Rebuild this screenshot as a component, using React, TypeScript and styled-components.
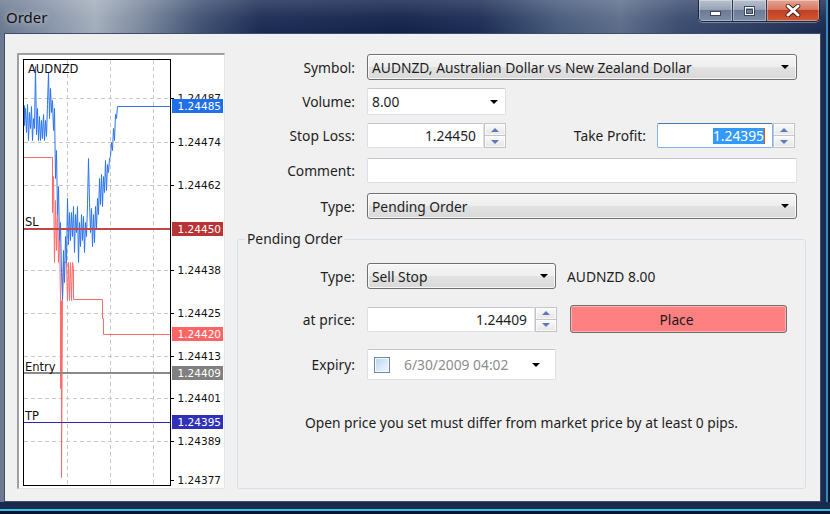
import React from "react";
import styled, { createGlobalStyle } from "styled-components";

const GlobalStyle = createGlobalStyle`
  html, body {
    margin: 0;
    padding: 0;
    background: #0b1530;
    overflow: hidden;
  }
  body {
    font-family: "Noto Sans", "Open Sans", sans-serif;
    font-size: 13.8px;
    color: #1e1e1e;
  }
`;

const Window = styled.div`
  width: 830px;
  height: 514px;
  box-sizing: border-box;
  display: flex;
  flex-direction: column;
  padding: 0 9px 12px 4px;
  background:
    linear-gradient(180deg, rgba(255,255,255,0.16) 0px, rgba(255,255,255,0.04) 18px, rgba(0,0,0,0) 33px),
    linear-gradient(90deg, #6a798f 0px, #8794a8 50px, #a3adbb 95px, #7c8a9e 140px, #3f5072 200px, #1b2b53 260px, #13224a 400px, #1c2c54 480px, #475a7b 560px, #5c6c89 620px, #3a4b6f 680px, #2a3b60 760px, #1a2a4e 830px);
  box-shadow:
    inset 0 -3px 0 #0a1430,
    inset 0 -5px 0 #36c0e2,
    inset 0 -12px 0 #1a2a4c,
    inset -2px 0 0 #0a1430,
    inset -4px 0 0 #2c8cbe;
`;

const TitleBar = styled.div`
  height: 33px;
  display: flex;
  align-items: flex-start;
  flex-shrink: 0;
`;

const Title = styled.div`
  margin: 8px 0 0 2px;
  font-size: 15px;
  line-height: 18px;
  color: #111;
  text-shadow: 0 0 6px rgba(255, 255, 255, 0.7);
`;

const Controls = styled.div`
  margin-left: auto;
  margin-right: 1px;
  display: flex;
  height: 21px;
  border: 1px solid #1a2540;
  border-top: none;
  border-radius: 0 0 5px 5px;
  overflow: hidden;
  box-shadow: 0 1px 0 rgba(255, 255, 255, 0.35);
`;

const CtlButton = styled.div<{ $close?: boolean; $w: number }>`
  width: ${(p) => p.$w}px;
  display: flex;
  align-items: center;
  justify-content: center;
  box-shadow: inset 0 0 0 1px rgba(255, 255, 255, 0.35);
  background: ${(p) =>
    p.$close
      ? "linear-gradient(180deg, #e6a494 0%, #d77a62 45%, #c13e22 50%, #cf5a36 100%)"
      : "linear-gradient(180deg, #b9c2cf 0%, #97a3b5 45%, #6d7c96 50%, #7d8ca4 100%)"};
  & + & {
    border-left: 1px solid #2c3856;
  }
`;

const Client = styled.div`
  flex: 1;
  display: flex;
  background: #f0f0f0;
  border: 1px solid #3d4d6b;
  padding: 19px 14px 12px 12px;
  min-height: 0;
`;

const ChartFrame = styled.div`
  width: 208px;
  height: 436px;
  box-sizing: border-box;
  flex-shrink: 0;
  background: #fff;
  border-style: solid;
  border-width: 2px 1px 1px 2px;
  border-color: #a0a0a0 #e4e4e4 #e4e4e4 #a0a0a0;
  svg {
    display: block;
  }
`;

const Form = styled.div`
  flex: 1;
  margin-left: 12px;
  display: flex;
  flex-direction: column;
  padding-top: 1px;
`;

const Row = styled.div<{ $h: number; $mt?: number }>`
  display: grid;
  grid-template-columns: 118px 1fr;
  column-gap: 12px;
  align-items: center;
  height: ${(p) => p.$h}px;
  margin-top: ${(p) => p.$mt ?? 0}px;
  padding-right: 9px;
`;

const Label = styled.div`
  text-align: right;
  white-space: nowrap;
`;

const Cell = styled.div`
  display: flex;
  align-items: center;
  height: 100%;
  min-width: 0;
`;

const SelectBox = styled.div<{ $w?: number }>`
  width: ${(p) => (p.$w ? `${p.$w}px` : "100%")};
  height: 26px;
  box-sizing: border-box;
  display: flex;
  align-items: center;
  padding: 0 7px 0 4px;
  border: 1px solid #707070;
  border-radius: 3px;
  background: linear-gradient(180deg, #f6f6f6 0%, #eeeeee 50%, #e2e2e2 52%, #d9d9d9 100%);
  box-shadow: inset 0 0 0 1px rgba(255, 255, 255, 0.75);
  white-space: nowrap;
`;

const SelectText = styled.span`
  flex: 1;
  overflow: hidden;
`;

const Arrow = styled.span`
  width: 0;
  height: 0;
  border-left: 4px solid transparent;
  border-right: 4px solid transparent;
  border-top: 4px solid #000;
  flex-shrink: 0;
`;

const TextBox = styled.div<{ $w?: number; $h?: number; $focus?: boolean; $right?: boolean }>`
  width: ${(p) => (p.$w ? `${p.$w}px` : "100%")};
  height: ${(p) => p.$h ?? 25}px;
  box-sizing: border-box;
  display: flex;
  align-items: center;
  justify-content: ${(p) => (p.$right ? "flex-end" : "flex-start")};
  padding: 0 7px 0 4px;
  background: #fff;
  border: 1px solid ${(p) => (p.$focus ? "#7eb4ea" : "#dce0e6")};
  border-top-color: ${(p) => (p.$focus ? "#3d7bad" : "#c2c6cd")};
  border-radius: 2px;
  white-space: nowrap;
  flex-shrink: 0;
`;

const Spinner = styled.div`
  width: 22px;
  height: 25px;
  box-sizing: border-box;
  display: flex;
  flex-direction: column;
  border: 1px solid #c4c4c4;
  flex-shrink: 0;
`;

const SpinHalf = styled.div`
  flex: 1;
  display: flex;
  align-items: center;
  justify-content: center;
  background: linear-gradient(180deg, #fafafa, #e6e6e6);
  box-shadow: inset 0 0 0 1px rgba(255, 255, 255, 0.7);
  & + & {
    border-top: 1px solid #c4c4c4;
  }
`;

const SpinArrow = styled.span<{ $up?: boolean }>`
  width: 0;
  height: 0;
  border-left: 4px solid transparent;
  border-right: 4px solid transparent;
  ${(p) => (p.$up ? "border-bottom: 4px solid #5b7ab8;" : "border-top: 4px solid #5b7ab8;")}
`;

const Selection = styled.span`
  background: #3399ff;
  color: #fff;
  line-height: 16px;
  border-right: 1px solid #c86400;
`;

const InlineLabel = styled.div`
  flex: 1;
  text-align: right;
  margin-right: 11px;
  white-space: nowrap;
`;

const Group = styled.fieldset`
  flex: 1;
  margin: 11px 0 0 0;
  padding: 15px 0 0 0;
  border: 1px solid #d5dfe5;
  border-radius: 3px;
  min-width: 0;
  display: flex;
  flex-direction: column;
`;

const Legend = styled.legend`
  margin-left: 7px;
  padding: 0 2px;
  line-height: 18px;
`;

const GroupRow = styled(Row)`
  grid-template-columns: 117px 1fr;
  padding-right: 0;
`;

const SideText = styled.span`
  margin-left: 11px;
  white-space: nowrap;
`;

const PlaceButton = styled.button`
  margin-left: 13px;
  width: 217px;
  height: 28px;
  border: 1px solid #707070;
  border-radius: 3px;
  background: #ff8080;
  box-shadow: inset 0 0 0 1px #ffb0b0;
  font-family: inherit;
  font-size: inherit;
  color: #1a1a1a;
  padding: 0 4px 0 0;
`;

const Check = styled.span`
  width: 16px;
  height: 16px;
  box-sizing: border-box;
  border: 1px solid #6f88a4;
  background: linear-gradient(135deg, #b8d4ee 0%, #dcebfa 60%, #eef5fd 100%);
  box-shadow: inset 0 0 0 1px #f4f8fc;
  margin: 0 14px 0 2px;
  flex-shrink: 0;
`;

const DateText = styled.span`
  color: #8c8c8c;
  width: 106px;
  overflow: hidden;
  white-space: nowrap;
  flex-shrink: 0;
`;

const Message = styled.div`
  margin-top: 34px;
  text-align: center;
  line-height: 18px;
`;

const gridLines = [
  { y: 98, label: "1.24487" },
  { y: 142, label: "1.24474" },
  { y: 185, label: "1.24462" },
  { y: 270, label: "1.24438" },
  { y: 313, label: "1.24425" },
  { y: 356, label: "1.24413" },
  { y: 398, label: "1.24401" },
  { y: 441, label: "1.24389" },
  { y: 480, label: "1.24377", noLine: true },
];

const markers = [
  { y: 106, label: "1.24485", color: "#1f6fe8" },
  { y: 229, label: "1.24450", color: "#b93434" },
  { y: 334, label: "1.24420", color: "#ff6464" },
  { y: 373, label: "1.24409", color: "#808080" },
  { y: 422, label: "1.24395", color: "#3030b8" },
];

const bid: [number, number][] = [
  [24,105],[24,125],[25,108],[26,132],[27,104],[28,140],[29,112],[30,128],[31,106],[32,140],[33,118],[34,128],[35,66],[36,134],[37,108],[38,140],[39,116],[40,140],[41,120],[42,138],[43,114],[44,140],[45,120],[46,136],[47,104],[48,72],[49,118],[50,88],[51,112],[52,100],[53,130],[54,108],[55,178],[56,150],[57,214],[58,186],[59,240],[60,222],[61,272],[62,299],[63,250],[64,282],[65,236],[66,262],[67,198],[68,244],[69,212],[70,240],[71,212],[72,236],[73,206],[74,252],[75,214],[76,232],[77,206],[78,262],[79,222],[80,246],[81,214],[82,240],[83,216],[84,252],[85,222],[86,236],[87,204],[88,158],[89,202],[90,232],[91,208],[92,246],[93,214],[94,242],[95,206],[96,228],[97,198],[98,214],[99,178],[100,204],[101,174],[102,206],[103,176],[104,192],[105,160],[106,190],[107,164],[108,172],[109,158],[110,156],[111,142],[112,150],[113,128],[114,140],[115,114],[116,118],[117,106],[170,106],
];

const ask: [number, number][] = [
  [23,157],[52,157],[52,212],[53,176],[54,262],[55,200],[56,250],[57,210],[58,262],[59,230],[60,300],[60,388],[61,300],[61,477],[62,300],[63,262],[66,262],[67,300],[68,262],[69,300],[70,262],[71,300],[72,262],[73,268],[73,299],[102,299],[102,318],[103,318],[103,334],[170,334],
];

const toPath = (pts: [number, number][]) =>
  pts.map(([x, y], i) => `${i ? "L" : "M"}${x + 0.5},${y + 0.5}`).join(" ");

function Chart() {
  return (
    <svg width={205} height={433} viewBox="19 55 205 433">
      {[67, 110, 153].map((x) => (
        <line key={x} x1={x + 0.5} y1={60} x2={x + 0.5} y2={485} stroke="#c8c8c8" strokeDasharray="4 3" />
      ))}
      {gridLines.filter((g) => !g.noLine).map((g) => (
        <line key={g.y} x1={24} y1={g.y + 0.5} x2={170} y2={g.y + 0.5} stroke="#c8c8c8" strokeDasharray="4 3" />
      ))}
      <path d={toPath(ask)} fill="none" stroke="#ff6a6a" strokeWidth={1} />
      <path d={toPath(bid)} fill="none" stroke="#2a74f0" strokeWidth={1} />
      <line x1={23} y1={229} x2={170} y2={229} stroke="#c04848" strokeWidth={2} />
      <line x1={23} y1={373} x2={170} y2={373} stroke="#8a8a8a" strokeWidth={2} />
      <line x1={23} y1={422.5} x2={170} y2={422.5} stroke="#2828b0" strokeWidth={1.2} />
      <rect x={23.5} y={59.5} width={147} height={426} fill="none" stroke="#000" />
      <g fontFamily="'DejaVu Sans', sans-serif" fontSize={10.5} fill="#111">
        {gridLines.map((g) => (
          <g key={g.label}>
            <line x1={171} y1={g.y + 0.5} x2={174} y2={g.y + 0.5} stroke="#000" />
            <text x={221} y={g.y + 4} textAnchor="end">{g.label}</text>
          </g>
        ))}
        {markers.map((m) => (
          <g key={m.label}>
            <rect x={172} y={m.y - 7} width={51} height={14} fill={m.color} />
            <text x={221} y={m.y + 4} textAnchor="end" fill="#fff">{m.label}</text>
          </g>
        ))}
      </g>
      <g fontFamily="'DejaVu Sans', sans-serif" fontSize={11.5} fill="#111">
        <text x={28} y={73}>AUDNZD</text>
        <text x={25} y={226}>SL</text>
        <text x={25} y={371}>Entry</text>
        <text x={25} y={420}>TP</text>
      </g>
    </svg>
  );
}

function SpinBox({ w, value, focus }: { w: number; value: React.ReactNode; focus?: boolean }) {
  return (
    <>
      <TextBox $w={w} $right $focus={focus}>{value}</TextBox>
      <Spinner>
        <SpinHalf><SpinArrow $up /></SpinHalf>
        <SpinHalf><SpinArrow /></SpinHalf>
      </Spinner>
    </>
  );
}

export default function App() {
  return (
    <>
      <GlobalStyle />
      <Window>
        <TitleBar>
          <Title>Order</Title>
          <Controls>
            <CtlButton $w={33}>
              <svg width="13" height="12" viewBox="0 0 13 12">
                <rect x="1.5" y="6.5" width="10" height="4" fill="#fff" stroke="#3a4560" />
              </svg>
            </CtlButton>
            <CtlButton $w={33}>
              <svg width="13" height="12" viewBox="0 0 13 12">
                <rect x="1.5" y="1.5" width="10" height="9" fill="none" stroke="#3a4560" />
                <rect x="2.5" y="2.5" width="8" height="7" fill="none" stroke="#fff" />
                <rect x="3.5" y="4.5" width="6" height="4" fill="none" stroke="#3a4560" />
              </svg>
            </CtlButton>
            <CtlButton $w={52} $close>
              <svg width="16" height="13" viewBox="0 0 16 13">
                <path d="M3 2 L13 11 M13 2 L3 11" stroke="#4a1a12" strokeWidth="4.6" strokeLinecap="round" />
                <path d="M3 2 L13 11 M13 2 L3 11" stroke="#fff" strokeWidth="3" strokeLinecap="round" />
              </svg>
            </CtlButton>
          </Controls>
        </TitleBar>
        <Client>
          <ChartFrame>
            <Chart />
          </ChartFrame>
          <Form>
            <Row $h={26}>
              <Label>Symbol:</Label>
              <SelectBox>
                <SelectText>AUDNZD, Australian Dollar vs New Zealand Dollar</SelectText>
                <Arrow />
              </SelectBox>
            </Row>
            <Row $h={27} $mt={8}>
              <Label>Volume:</Label>
              <Cell>
                <TextBox $w={139} $h={27}>
                  <SelectText>8.00</SelectText>
                  <Arrow />
                </TextBox>
              </Cell>
            </Row>
            <Row $h={25} $mt={8}>
              <Label>Stop Loss:</Label>
              <Cell>
                <SpinBox w={117} value="1.24450" />
                <InlineLabel>Take Profit:</InlineLabel>
                <SpinBox w={116} value={<Selection>1.24395</Selection>} focus />
                <span style={{ width: 2 }} />
              </Cell>
            </Row>
            <Row $h={25} $mt={10}>
              <Label>Comment:</Label>
              <TextBox />
            </Row>
            <Row $h={26} $mt={10}>
              <Label>Type:</Label>
              <SelectBox>
                <SelectText>Pending Order</SelectText>
                <Arrow />
              </SelectBox>
            </Row>
            <Group>
              <Legend>Pending Order</Legend>
              <GroupRow $h={26}>
                <Label>Type:</Label>
                <Cell>
                  <SelectBox $w={189}>
                    <SelectText>Sell Stop</SelectText>
                    <Arrow />
                  </SelectBox>
                  <SideText>AUDNZD 8.00</SideText>
                </Cell>
              </GroupRow>
              <GroupRow $h={28} $mt={16}>
                <Label>at price:</Label>
                <Cell>
                  <SpinBox w={168} value="1.24409" />
                  <PlaceButton>Place</PlaceButton>
                </Cell>
              </GroupRow>
              <GroupRow $h={31} $mt={16}>
                <Label>Expiry:</Label>
                <Cell>
                  <TextBox $w={189} $h={31}>
                    <Check />
                    <DateText>6/30/2009 04:02</DateText>
                    <span style={{ flex: 1 }} />
                    <Arrow />
                    <span style={{ width: 8 }} />
                  </TextBox>
                </Cell>
              </GroupRow>
              <Message>Open price you set must differ from market price by at least 0 pips.</Message>
            </Group>
          </Form>
        </Client>
      </Window>
    </>
  );
}
